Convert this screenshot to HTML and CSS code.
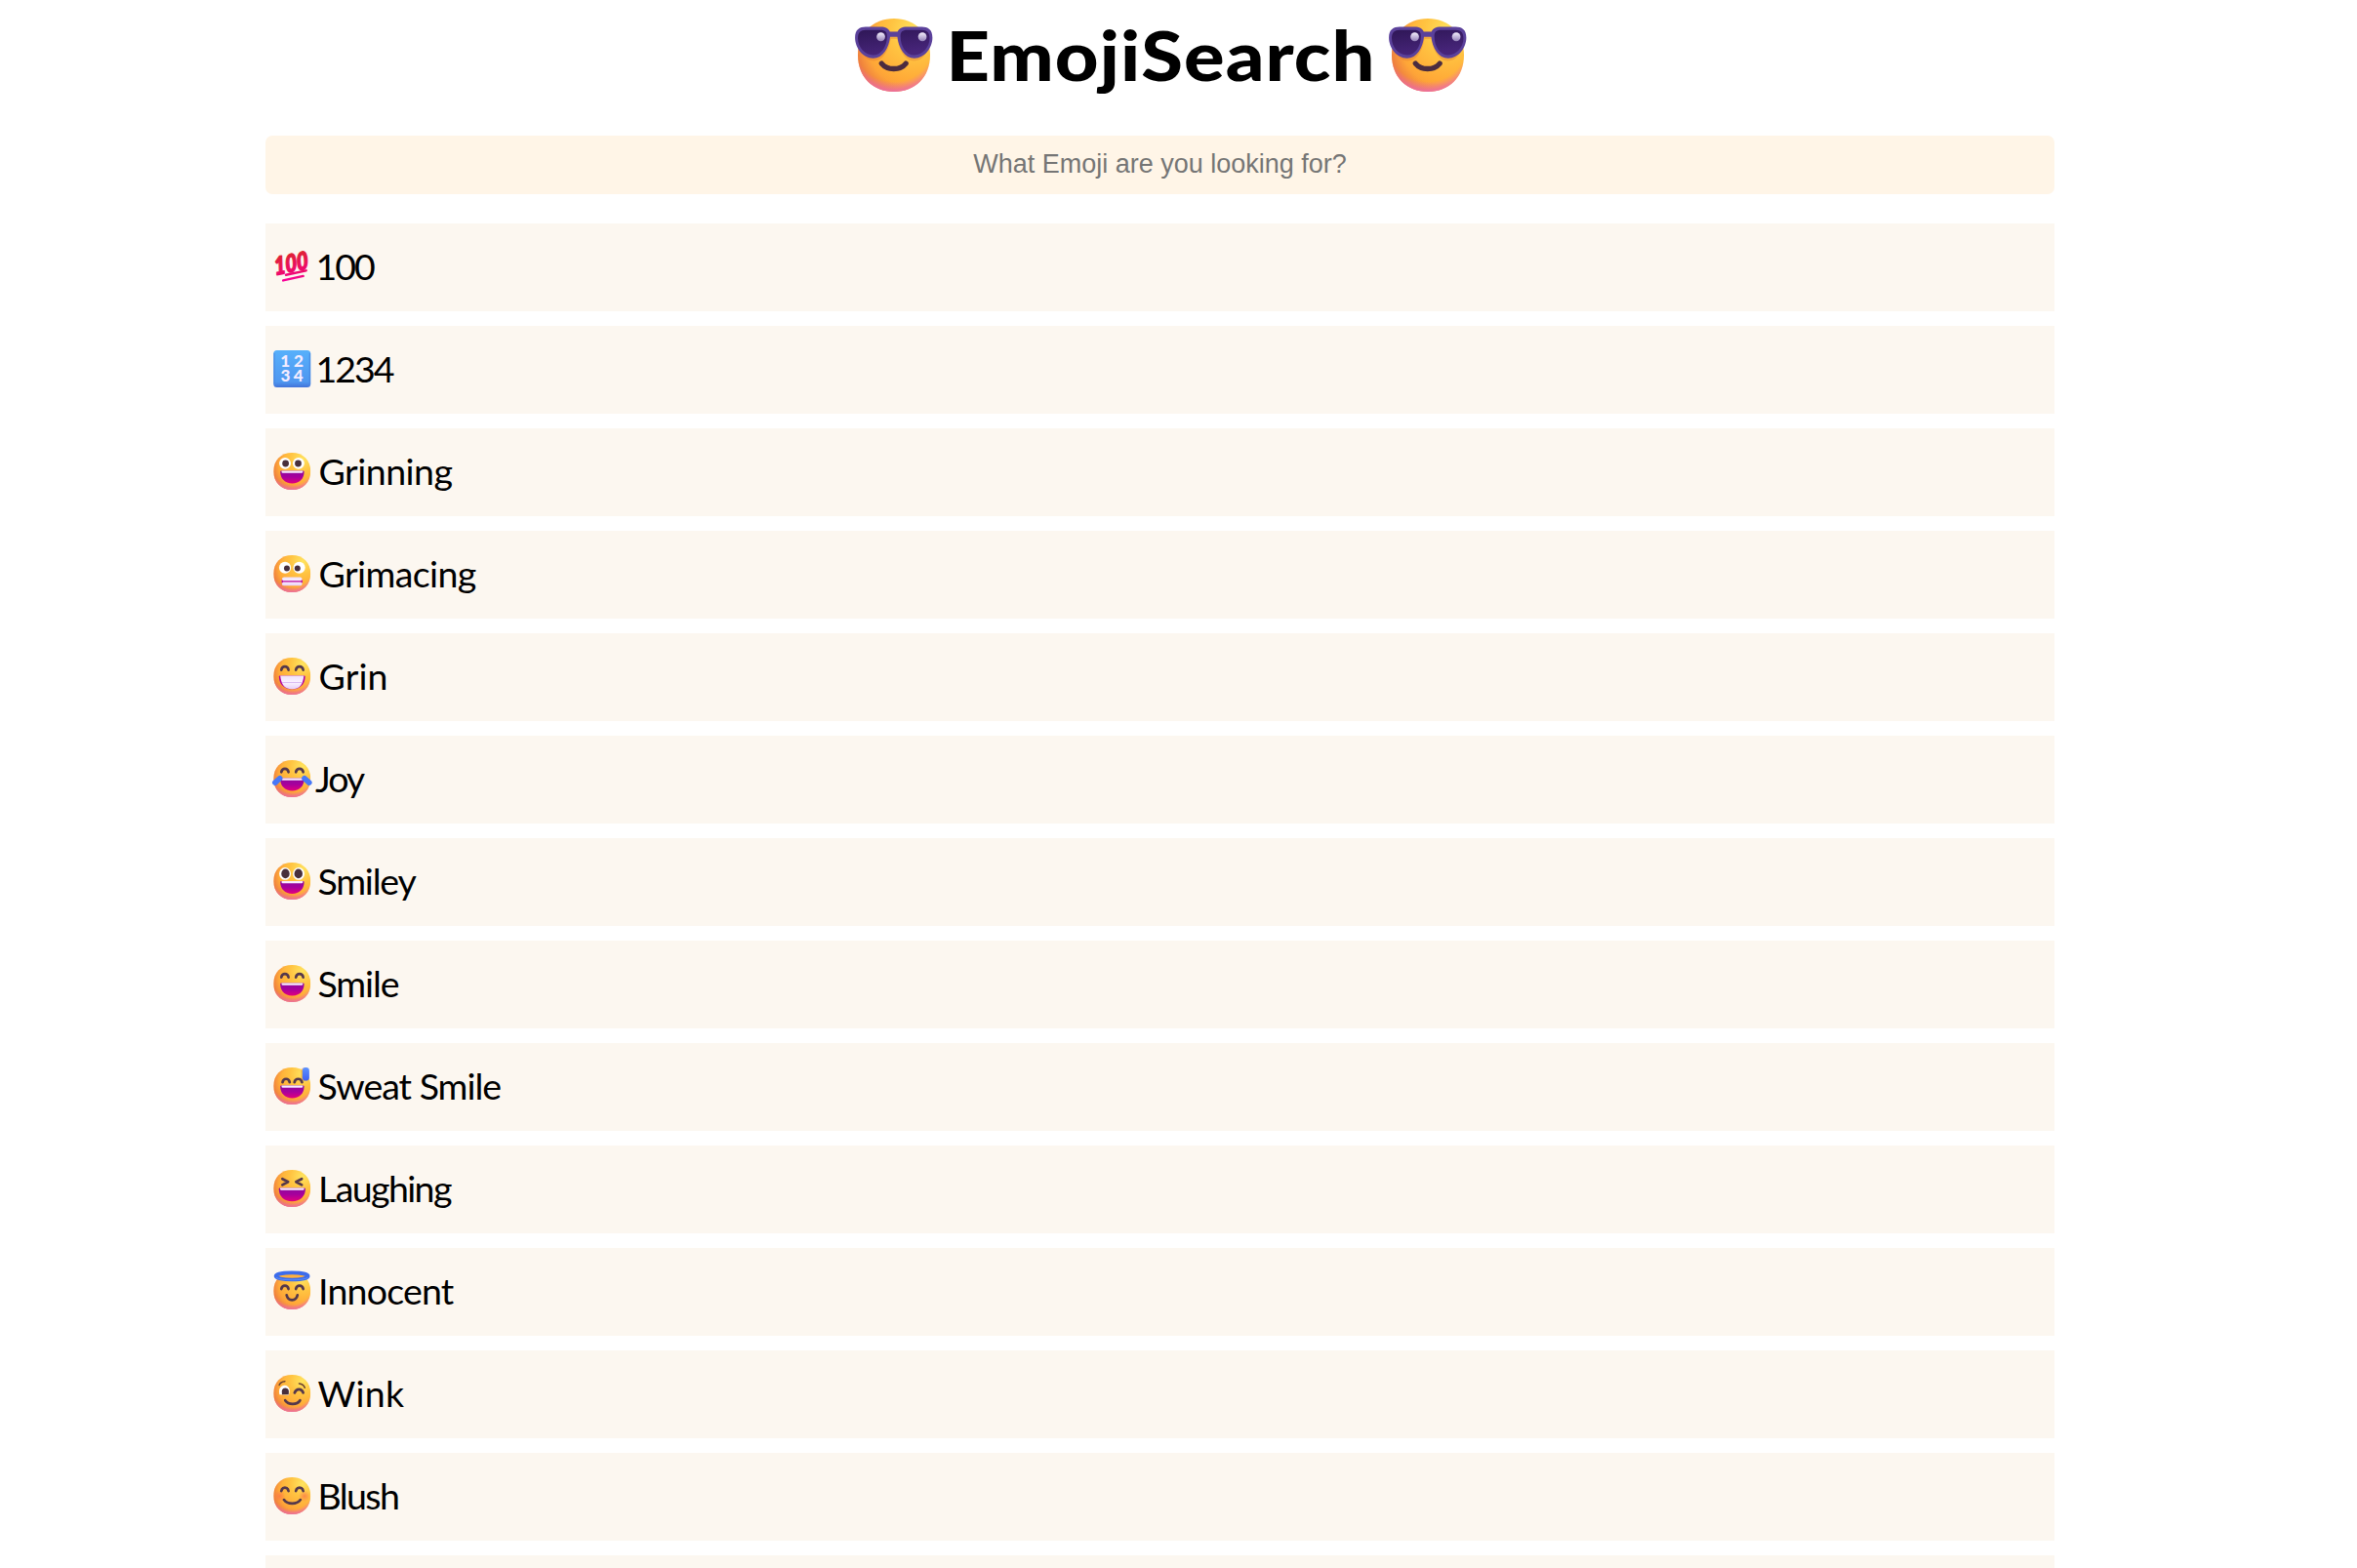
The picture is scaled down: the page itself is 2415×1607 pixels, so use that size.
FILE: index.html
```html
<!DOCTYPE html>
<html lang="en">
<head>
<meta charset="utf-8">
<title>Emoji Search</title>
<link rel="stylesheet" href="styles.css">
</head>
<body>
<svg class="defs" aria-hidden="true">
  <defs>
    <radialGradient id="base" cx="0.78" cy="0.18" r="0.95">
      <stop offset="0" stop-color="#ffe45f"/><stop offset="0.35" stop-color="#ffc341"/><stop offset="0.72" stop-color="#ffa937"/><stop offset="1" stop-color="#f6903c"/>
    </radialGradient>
    <radialGradient id="edge" cx="0.62" cy="0.42" r="0.64">
      <stop offset="0.72" stop-color="#e8704a" stop-opacity="0"/><stop offset="1" stop-color="#e0603f" stop-opacity="0.5"/>
    </radialGradient>
    <radialGradient id="chin" cx="0.5" cy="0.3" r="0.72">
      <stop offset="0.78" stop-color="#f06fae" stop-opacity="0"/><stop offset="1" stop-color="#ea68b4" stop-opacity="0.95"/>
    </radialGradient>
    <linearGradient id="mouth" x1="0" y1="0" x2="0" y2="1">
      <stop offset="0" stop-color="#8c0a9c"/><stop offset="0.5" stop-color="#a8009c"/><stop offset="1" stop-color="#e2007d"/>
    </linearGradient>
    <linearGradient id="teeth" x1="0" y1="0" x2="0" y2="1">
      <stop offset="0" stop-color="#efe0fb"/><stop offset="0.5" stop-color="#fbf2ff"/><stop offset="1" stop-color="#e7cff8"/>
    </linearGradient>
    <linearGradient id="blue" x1="0" y1="0" x2="0" y2="1">
      <stop offset="0" stop-color="#5c93ff"/><stop offset="1" stop-color="#3f5ff0"/>
    </linearGradient>
    <linearGradient id="key" x1="0" y1="0" x2="0" y2="1">
      <stop offset="0" stop-color="#57b0fb"/><stop offset="0.85" stop-color="#4f97f0"/><stop offset="1" stop-color="#4272d8"/>
    </linearGradient>
    <linearGradient id="red" gradientUnits="userSpaceOnUse" x1="0" y1="3" x2="0" y2="25">
      <stop offset="0" stop-color="#df2133"/><stop offset="0.6" stop-color="#ea0a60"/><stop offset="1" stop-color="#f8009a"/>
    </linearGradient>
    <linearGradient id="red-text" x1="0" y1="0.2" x2="0" y2="0.8">
      <stop offset="0" stop-color="#df2133"/><stop offset="1" stop-color="#ee0a6c"/>
    </linearGradient>
    <linearGradient id="lens" x1="0" y1="0" x2="0.3" y2="1">
      <stop offset="0" stop-color="#2f1757"/><stop offset="1" stop-color="#47257a"/>
    </linearGradient>
    <linearGradient id="glint" x1="0" y1="0" x2="0" y2="1">
      <stop offset="0" stop-color="#f4effc"/><stop offset="1" stop-color="#9381b8"/>
    </linearGradient>
    <radialGradient id="cheek"><stop offset="0" stop-color="#fb6a4c" stop-opacity="0.65"/><stop offset="1" stop-color="#fb6a4c" stop-opacity="0"/></radialGradient>
    <symbol id="face" viewBox="0 0 28 28" preserveAspectRatio="none">
      <path d="M14 0C22.2 0 28 5.6 28 14S22.2 28 14 28 0 22.4 0 14 5.8 0 14 0Z" fill="url(#base)"/>
      <path d="M14 0C22.2 0 28 5.6 28 14S22.2 28 14 28 0 22.4 0 14 5.8 0 14 0Z" fill="url(#edge)"/>
      <path d="M14 0C22.2 0 28 5.6 28 14S22.2 28 14 28 0 22.4 0 14 5.8 0 14 0Z" fill="url(#chin)"/>
    </symbol>
    <g id="happy-eyes"><path class="line" d="M5.9 9.3C6.5 5.9 10.7 5.9 11.3 9.3M16.9 9.3C17.5 5.9 21.8 5.9 22.4 9.3"/></g>
    <g id="open-mouth">
      <path d="M5.1 14.4Q5.1 13.7 5.9 13.7H22.3Q23.1 13.7 23.1 14.4C23.1 19.6 19.6 23.2 14.1 23.2S5.1 19.6 5.1 14.4Z" fill="url(#mouth)"/>
      <path d="M6.1 13.7H22.1V14.8Q22 15.3 21.3 15.3H6.9Q6.2 15.3 6.1 14.8Z" fill="#f6eaff"/>
    </g>
    <g id="cool">
      <use href="#face" width="28" height="28"/>
      <path d="M0.2 10C1.4 13.7 3.3 16.2 6.1 16.2 9.8 16.2 12 12 12.7 7.8H15.3C16 12 18.2 16.2 21.9 16.2 24.7 16.2 26.7 13.7 27.8 10V5H0.2Z" fill="#d9692e" opacity="0.28"/>
      <path d="M-1.1 7.3C-1.1 4.2.7 3.2 3 3.2H8.8C10.8 3.2 11.8 3.9 12.4 5H15.4C16 3.9 17 3.2 19 3.2H24.8C27.1 3.2 28.9 4.2 28.9 7.3 28.9 11.2 25.9 15.2 21.9 15.2 18.1 15.2 15.8 11.3 15.3 7H12.5C12 11.3 9.7 15.2 5.9 15.2 1.9 15.2-1.1 11.2-1.1 7.3Z" fill="#5b419b"/>
      <path d="M0 7.6C0 5.4 1 4.4 3 4.4H8.7C10.6 4.4 11.3 5.2 11.3 6.8 11.3 10.6 9.2 14 5.9 14 2.6 14 0 10.9 0 7.6ZM27.8 7.6C27.8 5.4 26.8 4.4 24.8 4.4H19.1C17.2 4.4 16.5 5.2 16.5 6.8 16.5 10.6 18.6 14 21.9 14 25.2 14 27.8 10.9 27.8 7.6Z" fill="url(#lens)"/>
      <circle cx="8.9" cy="7" r="1.65" fill="url(#glint)"/><circle cx="25" cy="7" r="1.65" fill="url(#glint)"/>
      <path d="M9.2 17.2C11.4 19.9 16.4 19.9 18.6 17.2" fill="none" stroke="#4b2c40" stroke-width="2" stroke-linecap="round"/>
    </g>
  </defs>
</svg>

<header class="title">
  <svg class="title-emoji" viewBox="0 0 28 28" preserveAspectRatio="none"><use href="#cool"/></svg>
  <h1>EmojiSearch</h1>
  <svg class="title-emoji" viewBox="0 0 28 28" preserveAspectRatio="none"><use href="#cool"/></svg>
</header>

<main class="content">
  <input class="search" type="text" placeholder="What Emoji are you looking for?">
  <ul class="results">
    <li class="row">
      <svg class="emoji" viewBox="0 0 28 28">
        <text class="hundred" transform="translate(1.2 20.6) rotate(-11) skewX(-4)" textLength="26" lengthAdjust="spacingAndGlyphs">100</text>
        <path d="M9.4 20.4 24.6 17.2M7.3 24.6 22.4 21.3" fill="none" stroke="url(#red)" stroke-width="1.8" stroke-linecap="round"/>
      </svg>
      <span class="name digits-name">100</span>
    </li>
    <li class="row">
      <svg class="emoji" viewBox="0 0 28 28">
        <rect width="28" height="28" rx="2.6" fill="url(#key)"/>
        <path d="M.6 2V25.5M27.4 2V25.5" stroke="#427fdd" stroke-width="1" opacity=".6"/>
        <g class="digits"><text x="8.8" y="12.2">1</text><text x="19" y="12.2">2</text><text x="9" y="23.4">3</text><text x="18.8" y="23.4">4</text></g>
      </svg>
      <span class="name digits-name">1234</span>
    </li>
    <li class="row">
      <svg class="emoji" viewBox="0 0 28 28">
        <use href="#face" width="28" height="28"/>
        <circle cx="8.7" cy="8" r="4.4" fill="#fff"/><circle cx="18.9" cy="8" r="4.4" fill="#fff"/>
        <circle cx="9.1" cy="8.1" r="2.5" fill="#482f3c"/><circle cx="18.6" cy="8.1" r="2.5" fill="#482f3c"/>
        <use href="#open-mouth"/>
      </svg>
      <span class="name grinning">Grinning</span>
    </li>
    <li class="row">
      <svg class="emoji" viewBox="0 0 28 28">
        <use href="#face" width="28" height="28"/>
        <circle cx="8.7" cy="9.4" r="4.5" fill="#fff"/><circle cx="19.4" cy="9.4" r="4.5" fill="#fff"/>
        <circle cx="10.1" cy="9.9" r="2.2" fill="#482f3c"/><circle cx="18.1" cy="9.9" r="2.2" fill="#482f3c"/>
        <rect x="6.4" y="16.6" width="15.2" height="6.5" rx="1.6" fill="url(#teeth)"/>
        <path d="M6.4 19.8H21.6M6.6 18.7V20.9M21.4 18.7V20.9" stroke="#b7009b" stroke-width="0.9"/>
      </svg>
      <span class="name grimacing">Grimacing</span>
    </li>
    <li class="row">
      <svg class="emoji" viewBox="0 0 28 28">
        <use href="#face" width="28" height="28"/><use href="#happy-eyes"/>
        <path d="M4.1 14.3Q4.1 13.7 4.8 13.7H23.2Q23.9 13.7 23.9 14.3C23.7 20 20.2 23.8 14 23.8S4.3 20 4.1 14.3Z" fill="#b2009d"/>
        <path d="M5.1 13.7H22.9C22.6 16.4 21.9 18.8 20.8 20.6 19.3 22.9 17 23.8 14 23.8S8.7 22.9 7.2 20.6C6.1 18.8 5.4 16.4 5.1 13.7Z" fill="url(#teeth)"/>
        <path d="M6.4 18.8H21.6" stroke="#d9b8f1" stroke-width=".7"/>
      </svg>
      <span class="name grin">Grin</span>
    </li>
    <li class="row">
      <svg class="emoji" viewBox="0 0 28 28">
        <use href="#face" width="28" height="28"/><use href="#happy-eyes" y="-0.2"/><use href="#open-mouth"/>
        <path d="M1.2 17 4.7 13.8M26.9 17 23.4 13.8" stroke="#4778f8" stroke-width="4.2" stroke-linecap="round"/>
      </svg>
      <span class="name joy">Joy</span>
    </li>
    <li class="row">
      <svg class="emoji" viewBox="0 0 28 28">
        <use href="#face" width="28" height="28"/>
        <ellipse cx="8.7" cy="8.4" rx="4.4" ry="4.7" fill="#fff"/><ellipse cx="19" cy="8.4" rx="4.4" ry="4.7" fill="#fff"/>
        <ellipse cx="9" cy="8.4" rx="3.1" ry="3.6" fill="#482f3c"/><ellipse cx="18.8" cy="8.4" rx="3.1" ry="3.6" fill="#482f3c"/>
        <use href="#open-mouth" y="0.3"/>
      </svg>
      <span class="name smiley">Smiley</span>
    </li>
    <li class="row">
      <svg class="emoji" viewBox="0 0 28 28"><use href="#face" width="28" height="28"/><use href="#happy-eyes"/><use href="#open-mouth"/></svg>
      <span class="name smile">Smile</span>
    </li>
    <li class="row">
      <svg class="emoji" viewBox="0 0 28 28">
        <use href="#face" width="28" height="28"/>
        <path class="line" d="M6.8 11.2C7.4 7.8 11.6 7.8 12.2 11.2M15.8 11.2C16.4 7.8 20.9 7.8 21.5 11.2"/><use href="#open-mouth"/>
        <rect x="20.7" y="0.2" width="5.4" height="10" rx="2.6" fill="#d97327" opacity=".35"/>
        <rect x="21.8" y="0" width="5.2" height="10" rx="2.5" fill="url(#blue)"/>
      </svg>
      <span class="name sweat-smile">Sweat Smile</span>
    </li>
    <li class="row">
      <svg class="emoji" viewBox="0 0 28 28">
        <use href="#face" width="28" height="28"/>
        <path class="line" d="M6.7 6.8 11 9 6.7 11.3M21.3 6.8 17 9 21.3 11.3"/>
        <path d="M4 14.4Q4 13.7 4.8 13.7H23.3Q24.1 13.7 24.1 14.4C24 20 20.2 23.7 14 23.7S4.1 20 4 14.4Z" fill="url(#mouth)"/>
        <path d="M5 13.7H23.1V14.8Q23 15.3 22.3 15.3H5.8Q5.1 15.3 5 14.8Z" fill="#f6eaff"/>
      </svg>
      <span class="name laughing">Laughing</span>
    </li>
    <li class="row">
      <svg class="emoji" viewBox="0 0 28 28">
        <use href="#face" width="28" height="28"/>
        <path class="line" d="M5.9 12.6C6.5 9.2 10.7 9.2 11.3 12.6M16.9 12.6C17.5 9.2 21.8 9.2 22.4 12.6M9.9 17.2C10.9 22.1 17.1 22.1 18.1 17.2"/>
        <path d="M-.5-.5H28.5V2.9H-.5Z" fill="#fcf7f0"/>
        <ellipse cx="13.9" cy="2.9" rx="10.6" ry="2.2" fill="#ffb13d"/>
        <ellipse cx="13.9" cy="2.9" rx="12.2" ry="2.6" fill="none" stroke="#3d6ceb" stroke-width="2.7"/>
        <path d="M2 4C5.4 6.3 22.4 6.3 25.8 4" fill="none" stroke="#5a8df8" stroke-width=".7"/>
      </svg>
      <span class="name innocent">Innocent</span>
    </li>
    <li class="row">
      <svg class="emoji" viewBox="0 0 28 28">
        <use href="#face" width="28" height="28"/>
        <path d="M4.5 15Q3.9 12.5 4.5 10.7C6 6.7 11.6 7 12.2 11.4Q12.3 13.8 11.4 15.2Z" fill="#fff"/>
        <path d="M6.4 15Q5.4 9.9 8.9 9.9T11.4 15Z" fill="#482f3c"/>
        <path class="line" d="M15.9 13.6C17.2 10 21.3 10 22.4 13.6M8.8 19.3C11.2 22.9 17.8 22.9 20 19.3"/>
        <path d="M4.3 7.7Q5.3 5.1 8.6 4.9M19.3 6.6Q22.8 7 23.6 9.8" fill="none" stroke="#694030" stroke-width="1.1" stroke-linecap="round"/>
      </svg>
      <span class="name wink">Wink</span>
    </li>
    <li class="row">
      <svg class="emoji" viewBox="0 0 28 28">
        <use href="#face" width="28" height="28"/>
        <circle cx="4.5" cy="14.2" r="4.4" fill="url(#cheek)"/><circle cx="23.4" cy="14.2" r="4.4" fill="url(#cheek)"/>
        <path class="line" d="M5.9 10.4C6.5 7 10.7 7 11.3 10.4M16.9 10.4C17.5 7 21.8 7 22.4 10.4M7.9 17C10.5 20.8 17.7 20.8 20.3 17"/>
      </svg>
      <span class="name blush">Blush</span>
    </li>
    <li class="row"></li>
  </ul>
</main>
</body>
</html>
```
FILE: styles.css
```css
* { box-sizing: border-box; }

body {
  margin: 0;
  height: 100vh;
  overflow: hidden;
  background: #fff;
  color: #000;
  font-family: "Gill Sans", "Gill Sans MT", Lato, sans-serif;
}

.defs { display: block; width: 0; height: 0; }

.title {
  display: flex;
  justify-content: center;
  width: 2378px;
  height: 139px;
  padding-top: 19px;
}

.title h1 {
  margin: 0;
  width: 473px;
  text-align: center;
  font-size: 71px;
  font-weight: 900;
  line-height: 74px;
  letter-spacing: 1px;
  white-space: nowrap;
  transform: scaleX(1.093);
}

.title-emoji { flex: none; width: 74px; height: 75px; overflow: visible; }

.content { width: 1833px; margin-left: 272px; }

.search {
  display: block;
  width: 100%;
  height: 60px;
  padding: 0 0 1px;
  border: 0;
  border-radius: 7px;
  background: #fff5e7;
  font: 27px "Liberation Sans", Arial, sans-serif;
  text-align: center;
}

.search::placeholder { color: #757575; }

.results {
  display: flex;
  flex-direction: column;
  gap: 15px;
  margin: 30px 0 0;
  padding: 0;
  list-style: none;
}

.row {
  display: flex;
  gap: 7px;
  flex: none;
  height: 90px;
  padding: 25px 8px 0;
  background: #fcf7f0;
}

.emoji { flex: none; width: 38.5px; height: 38px; overflow: visible; }

.name {
  font-size: 37.5px;
  line-height: 37px;
  white-space: nowrap;
}

/* per-name tracking */
.digits-name { margin-left: -2px; letter-spacing: -2px; }
.grinning { margin-left: 1px; letter-spacing: -0.5px; }
.grimacing { margin-left: 1px; letter-spacing: -0.6px; }
.grin { margin-left: 1px; letter-spacing: 0.1px; }
.joy { margin-left: -2.5px; letter-spacing: -2px; }
.smiley { letter-spacing: -1.2px; }
.smile { letter-spacing: -1.1px; }
.sweat-smile { letter-spacing: -1px; }
.laughing { margin-left: 0.5px; letter-spacing: -1.6px; }
.innocent { margin-left: 0.5px; letter-spacing: -0.8px; }
.wink { letter-spacing: 0.3px; }
.blush { letter-spacing: -1.6px; }

.line {
  fill: none;
  stroke: #55384b;
  stroke-width: 2;
  stroke-linecap: round;
  stroke-linejoin: round;
}

.hundred {
  font: italic 900 18.5px Lato, sans-serif;
  fill: url(#red-text);
  stroke: url(#red-text);
  stroke-width: 1.1px;
  stroke-linejoin: round;
}

.digits { font: 900 12.6px Lato, sans-serif; fill: #f4ecff; text-anchor: middle; }
```
